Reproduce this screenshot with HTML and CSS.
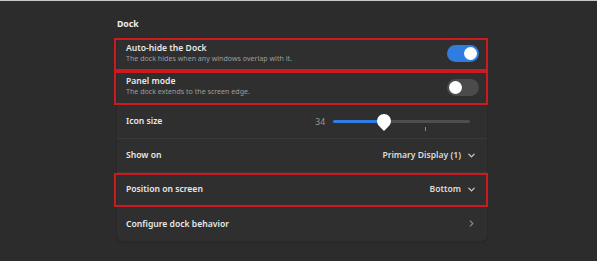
FILE: index.html
```html
<!DOCTYPE html>
<html>
<head>
<meta charset="utf-8">
<link rel="stylesheet" href="styles.css">
</head>
<body>
<div class="page">
  <section class="group">
    <h2 class="group-title">Dock</h2>
    <div class="card">
      <div class="row row-two marked">
        <div class="labels">
          <div class="title">Auto-hide the Dock</div>
          <div class="subtitle">The dock hides when any windows overlap with it.</div>
        </div>
        <div class="switch on"><span class="knob"></span></div>
      </div>
      <div class="row row-two marked">
        <div class="labels">
          <div class="title">Panel mode</div>
          <div class="subtitle">The dock extends to the screen edge.</div>
        </div>
        <div class="switch"><span class="knob"></span></div>
      </div>
      <div class="row">
        <div class="title">Icon size</div>
        <div class="slider-wrap">
          <span class="value">34</span>
          <div class="slider">
            <div class="fill" style="width: 37%"></div>
            <span class="thumb" style="left: 37%"></span>
            <span class="tick"></span>
          </div>
        </div>
      </div>
      <div class="row">
        <div class="title">Show on</div>
        <div class="combo">
          <span>Primary Display (1)</span>
          <svg class="chev" viewBox="0 0 10 10" width="9" height="9"><path d="M2 3.5 L5 6.5 L8 3.5" fill="none" stroke="#cfcfcf" stroke-width="1.4" stroke-linecap="round" stroke-linejoin="round"/></svg>
        </div>
      </div>
      <div class="row marked">
        <div class="title">Position on screen</div>
        <div class="combo">
          <span>Bottom</span>
          <svg class="chev" viewBox="0 0 10 10" width="9" height="9"><path d="M2 3.5 L5 6.5 L8 3.5" fill="none" stroke="#cfcfcf" stroke-width="1.4" stroke-linecap="round" stroke-linejoin="round"/></svg>
        </div>
      </div>
      <div class="row last">
        <div class="title">Configure dock behavior</div>
        <svg class="arrow" viewBox="0 0 10 10" width="9" height="9"><path d="M3.5 2 L6.5 5 L3.5 8" fill="none" stroke="#8a8a8a" stroke-width="1.3" stroke-linecap="round" stroke-linejoin="round"/></svg>
      </div>
    </div>
  </section>
</div>
</body>
</html>
```
FILE: styles.css
```css
* { box-sizing: border-box; }
html, body {
  margin: 0;
  padding: 0;
}
body {
  width: 597px;
  height: 261px;
  background: #2c2c2c;
  border-top: 1px solid #c9c9c9;
  font-family: "Noto Sans", "DejaVu Sans", sans-serif;
  color: #e6e6e6;
  overflow: hidden;
}
.page {
  padding-left: 117px;
  padding-top: 17px;
}
.group {
  width: 370px;
}
.group-title {
  margin: 0 0 8px 0;
  font-size: 8.7px;
  font-weight: 700;
  line-height: 12px;
  color: #ececec;
}
.card {
  background: #2f2f2f;
  border-radius: 6px;
  box-shadow: 0 0 0 1px #292929, 0 1px 2px rgba(0,0,0,0.25);
}
.row {
  position: relative;
  display: flex;
  align-items: center;
  justify-content: space-between;
  height: 34px;
  padding: 0 9px 1px 9px;
  border-bottom: 1px solid #393939;
}
.row.last { border-bottom: none; }
.row-two { height: 33px; padding-bottom: 3px; }
.row-two + .row-two { height: 34px; }
.marked::after {
  content: "";
  position: absolute;
  left: -3px;
  right: -1px;
  top: 0;
  bottom: -1px;
  border: 2px solid #cc1a1f;
  pointer-events: none;
}
.labels {
  display: flex;
  flex-direction: column;
}
.title {
  font-size: 8.6px;
  font-weight: 600;
  line-height: 10px;
  color: #e8e8e8;
}
.subtitle {
  font-size: 7.1px;
  line-height: 10px;
  color: #9d9d9d;
}
.row-two .switch { margin-top: 2px; }
.switch {
  position: relative;
  width: 32px;
  height: 17px;
  border-radius: 9px;
  background: #4b4b4b;
  margin-right: -1px;
}
.switch.on { background: #2f7de0; }
.knob {
  position: absolute;
  top: 2px;
  left: 2px;
  width: 13px;
  height: 13px;
  border-radius: 50%;
  background: #ffffff;
}
.switch.on .knob { left: 17px; }
.slider-wrap {
  display: flex;
  align-items: center;
  gap: 8px;
  margin-right: 8px;
}
.value {
  font-size: 8.5px;
  color: #9a9a9a;
}
.slider {
  position: relative;
  width: 137px;
  height: 3px;
  border-radius: 2px;
  background: #4e4e4e;
}
.fill {
  height: 3px;
  border-radius: 2px;
  background: #2f7de0;
}
.thumb {
  position: absolute;
  top: -6px;
  width: 14px;
  height: 14px;
  margin-left: -7px;
  border-radius: 50% 50% 50% 0;
  transform: rotate(-45deg);
  background: #ffffff;
}
.tick {
  position: absolute;
  left: 67%;
  top: 7px;
  width: 1px;
  height: 4px;
  background: #8a8a8a;
}
.combo {
  display: flex;
  align-items: center;
  gap: 6px;
  font-size: 8.6px;
  font-weight: 600;
  color: #dcdcdc;
  margin-right: 2px;
}
.chev { display: block; }
.arrow { display: block; margin-right: 2px; }
```
